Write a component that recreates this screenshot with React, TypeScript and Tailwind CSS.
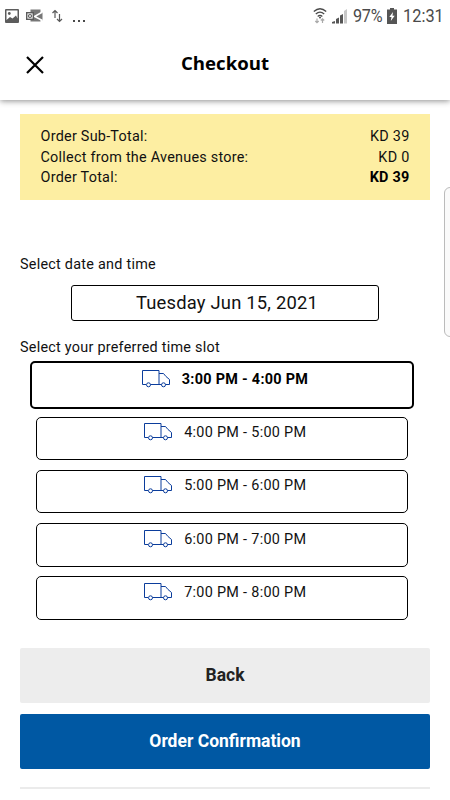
import clsx from 'clsx';

interface SummaryRow {
  label: string;
  value: string;
  bold?: boolean;
}

const summaryRows: SummaryRow[] = [
  { label: 'Order Sub-Total:', value: 'KD 39' },
  { label: 'Collect from the Avenues store:', value: 'KD 0' },
  { label: 'Order Total:', value: 'KD 39', bold: true },
];

const timeSlots = [
  '3:00 PM - 4:00 PM',
  '4:00 PM - 5:00 PM',
  '5:00 PM - 6:00 PM',
  '6:00 PM - 7:00 PM',
  '7:00 PM - 8:00 PM',
];

function StatusBar() {
  return (
    <div className="flex h-8 items-center justify-between pr-[7px] pl-[5px] text-[#4a4a4a]">
      <div className="flex items-center">
        <svg width="14" height="14" viewBox="0 0 14 14">
          <rect width="14" height="14" rx="1" fill="#5c5c5c" />
          <path d="M1.500 1.500h11v8L11 6.500 7.500 9.500 5 8l-3.500 3z" fill="#fff" />
          <circle cx="4.300" cy="4.500" r="1.400" fill="#5c5c5c" />
        </svg>
        <svg width="17" height="14" viewBox="0 0 17 14" className="ml-[7px]">
          <path d="M4.500 0.500h10v12h-10z" fill="#777" />
          <path d="M16.500 3L8.500 7.500l8 4" fill="#777" stroke="#fff" strokeWidth="1.500" />
          <rect x="0.700" y="3.700" width="6.600" height="6.600" fill="#fff" stroke="#5c5c5c" strokeWidth="1.400" />
          <circle cx="4" cy="7" r="1.500" fill="none" stroke="#5c5c5c" strokeWidth="1.200" />
        </svg>
        <svg
          width="11"
          height="14"
          viewBox="0 0 11 14"
          className="ml-[9px]"
          fill="none"
          stroke="#5a5a5a"
          strokeWidth="1.200"
        >
          <path d="M3 9V1.500M0.500 4L3 1.500 5.500 4M7.500 5v7.500M5 10l2.500 2.500L10 10" />
        </svg>
        <svg width="14" height="14" viewBox="0 0 14 14" className="ml-[9px]" fill="#4a4a4a">
          <path d="M1 11h2v2H1zM6 11h2v2H6zM11 11h2v2h-2z" />
        </svg>
      </div>
      <div className="flex items-center">
        <svg width="14" height="16" viewBox="0 0 14 16" fill="none">
          <path
            d="M0.800 3.500Q7 -2 13.200 3.500M2.800 6Q7 2.300 11.200 6M4.700 8.400Q7 6.300 9.300 8.400"
            stroke="#4a4a4a"
            strokeWidth="1.300"
          />
          <circle cx="7" cy="9.500" r="1" fill="#4a4a4a" />
          <path
            d="M4 10.500v4M2.300 13L4 14.700 5.700 13M9.500 15v-4M7.800 12.500l1.700-1.700 1.700 1.700"
            stroke="#aaa"
            strokeWidth="1.200"
          />
        </svg>
        <svg width="15" height="16" viewBox="0 0 15 16" className="ml-[5px]">
          <path d="M0 14l3-1v2.500H0zM4 11l3-1.500v6H4zM8 7.500L11 6v9.500H8z" fill="#555" />
          <path d="M12 3l3-2v14.500h-3z" fill="#c8c8c8" />
        </svg>
        <span className="ml-[6px] w-[30px] origin-left scale-x-[0.900] text-[18px] leading-none tracking-[-0.300px] whitespace-nowrap">
          97%
        </span>
        <svg width="10" height="16" viewBox="0 0 10 16" className="ml-[4px]">
          <path d="M3 0h4v1.500h3V16H0V1.500h3z" fill="#555" />
          <path d="M6 4L2.300 9h2.200L3.800 13 7.700 7.700H5.500z" fill="#fff" />
        </svg>
        <span className="ml-[6px] w-[40px] origin-left scale-x-[0.910] text-[18px] leading-none whitespace-nowrap">
          12:31
        </span>
      </div>
    </div>
  );
}

function TruckIcon() {
  return (
    <svg width="29" height="18" viewBox="0 0 29 18" fill="none" stroke="#0b3d9c" strokeWidth="1">
      <path d="M4 14.500H0.500v-14h16.500v14H8.500M17 3.500h4.500l2.500 3 3.500 3v5h-4M17 14.500h2.500" />
      <circle cx="6.500" cy="14.800" r="2" />
      <circle cx="21.500" cy="14.800" r="2" />
    </svg>
  );
}

function TimeSlot({ label, selected }: { label: string; selected: boolean }) {
  return (
    <button
      className={clsx(
        'flex items-start justify-center rounded-[5px] border-black bg-white pl-[6px] text-[14.400px] tracking-[0.300px]',
        selected
          ? 'mr-[16px] mb-[-2px] ml-[10px] h-12 gap-[11px] border-[2.500px] pt-[7px] font-bold text-black'
          : 'mr-[22px] ml-[16px] h-[43.400px] gap-[11.500px] border pt-[5.500px] text-[#111]',
      )}
    >
      <TruckIcon />
      <span className="pt-px leading-[18px] whitespace-nowrap">{label}</span>
    </button>
  );
}

export default function App() {
  return (
    <div className="relative h-[800px] w-[450px] overflow-hidden bg-white font-['Roboto',sans-serif] text-[#111]">
      <header className="h-[100px] bg-white shadow-[0_1px_6px_rgba(0,0,0,0.450)]">
        <StatusBar />
        <div className="grid h-[63px] grid-cols-[70px_1fr_70px] items-center">
          <button aria-label="Close" className="pt-[3px] pl-[26px]">
            <svg width="18" height="18" viewBox="0 0 18 18" stroke="#000" strokeWidth="2.200">
              <path d="M1 1l16 16M17 1L1 17" />
            </svg>
          </button>
          <h1 className="pb-[2px] text-center font-['Open_Sans',sans-serif] text-[18.600px] leading-6 font-bold text-black">
            Checkout
          </h1>
        </div>
      </header>

      <main className="flex flex-col px-5 pt-[14px]">
        <section className="h-[85.500px] bg-[#fdeea2] px-[20.500px] pt-[13px]">
          {summaryRows.map((row, index) => (
            <div
              key={index}
              className="flex justify-between text-[14.400px] leading-[20.500px] tracking-[0.250px]"
            >
              <span>{row.label}</span>
              <span className={clsx(row.bold && 'font-bold text-black')}>{row.value}</span>
            </div>
          ))}
        </section>

        <p className="mt-[55.500px] text-[14.400px] leading-5 tracking-[0.250px]">
          Select date and time
        </p>
        <button className="mx-auto mt-[10px] h-[36px] w-[308px] rounded-[3px] border border-black pl-[4px] text-[18.400px] tracking-[0.200px]">
          Tuesday Jun 15, 2021
        </button>

        <p className="mt-[16.500px] text-[14.400px] leading-5 tracking-[0.250px]">
          Select your preferred time slot
        </p>
        <div className="mt-[3.500px] flex flex-col gap-[9.800px]">
          {timeSlots.map((slot, index) => (
            <TimeSlot key={slot} label={slot} selected={index === 0} />
          ))}
        </div>

        <button className="mt-[27.800px] h-[55px] rounded-[2px] bg-[#ededed] pt-px text-[17.500px] font-bold text-[#222]">
          Back
        </button>
        <button className="mt-[11.300px] h-[55px] rounded-[2px] bg-[#0058a3] text-[17.500px] font-bold text-white">
          Order Confirmation
        </button>
        <hr className="mt-[18.500px] h-[2px] border-0 bg-[#ebebeb]" />
      </main>

      {/* edge panel handle */}
      <div className="absolute top-[187px] right-[-6px] h-[150px] w-[12px] rounded-[6px] border border-[#bbb] bg-[#fafafa]" />
    </div>
  );
}
